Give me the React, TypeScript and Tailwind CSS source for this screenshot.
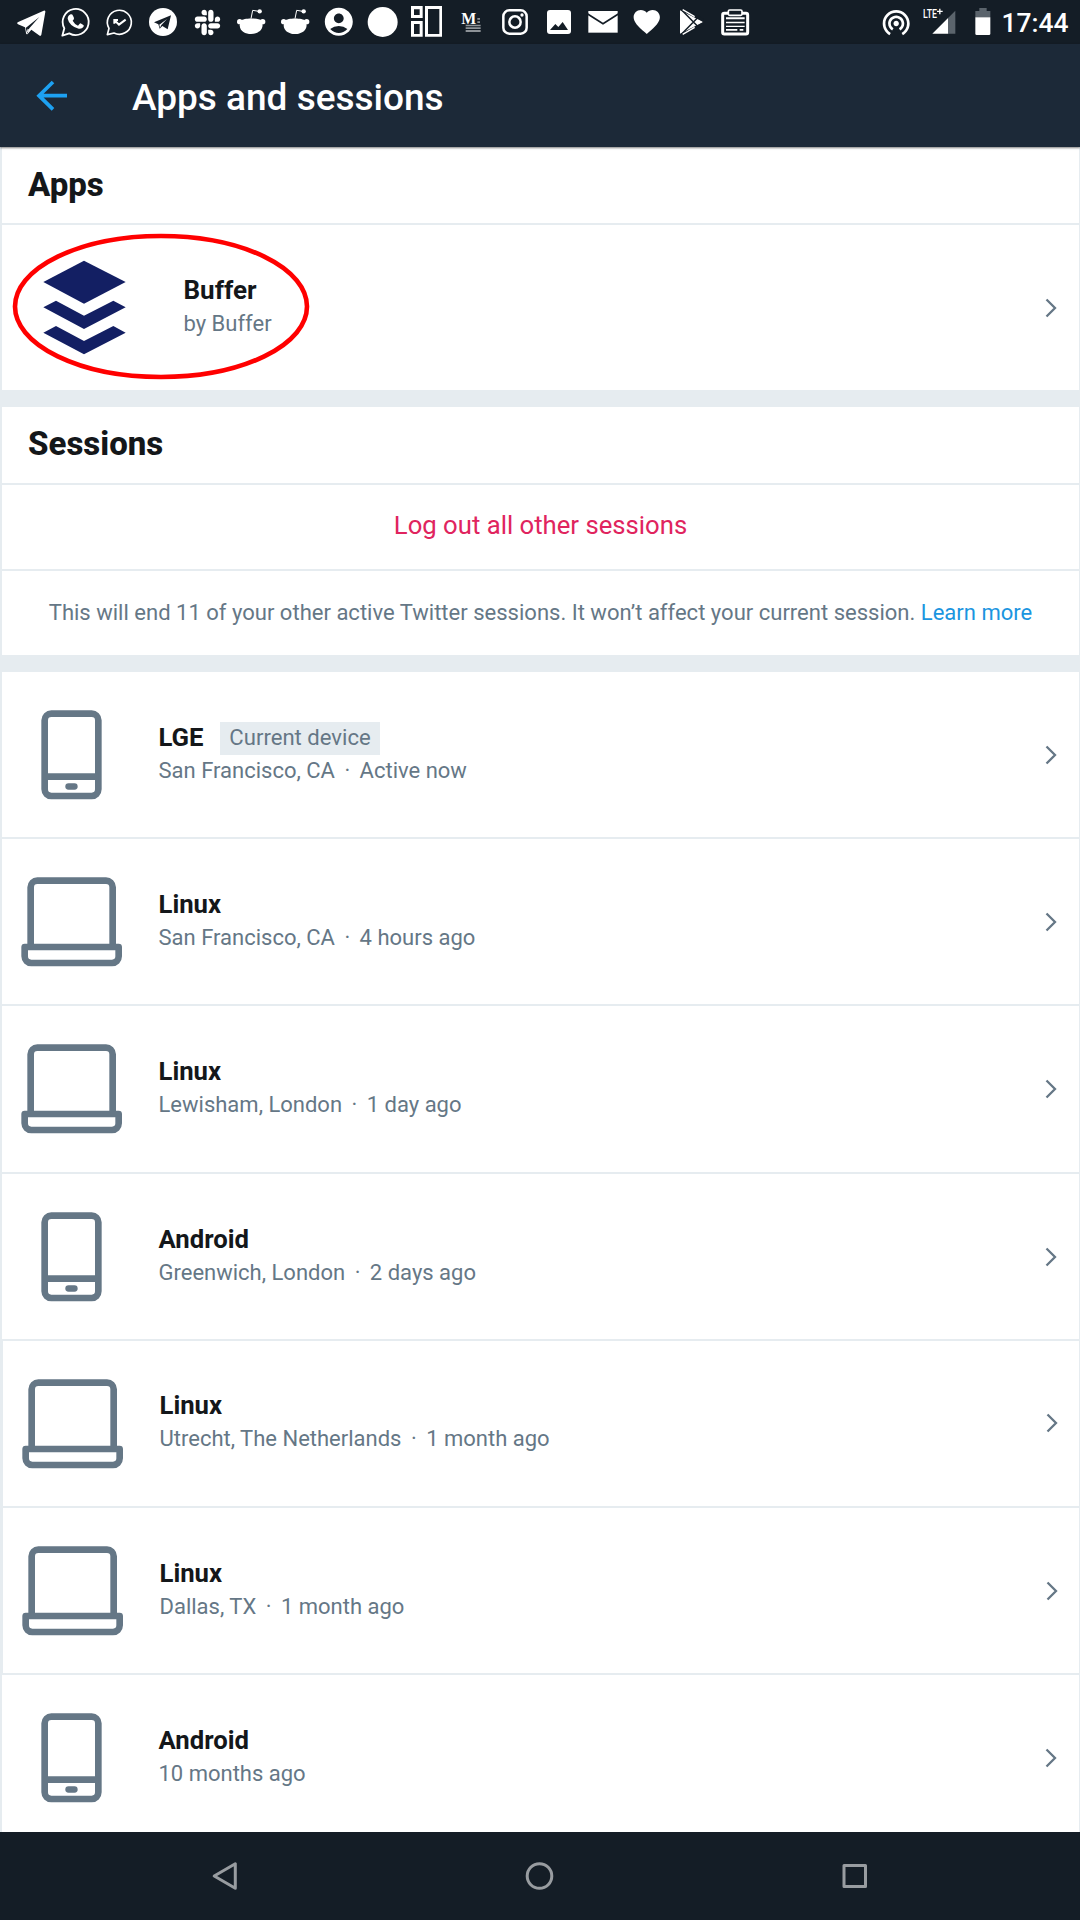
import React from 'react';
import { FaSlack } from 'react-icons/fa';
import { MdAccountCircle, MdFavorite, MdWifiTethering } from 'react-icons/md';

const DARK = '#141d26';

function Glyph({ x, children }: { x: number; children: React.ReactNode }) {
  return (
    <svg className="size-11" viewBox={`${x} 0 132 132`} fill="#fff">
      {children}
    </svg>
  );
}

function Slot({ children }: { children: React.ReactNode }) {
  return <div className="flex size-11 items-center justify-center">{children}</div>;
}

function RedditGlyph() {
  return (
    <Glyph x={687}>
      <path d="M722 62C731 53 775 53 785 62C796 90 772 102 753 102C734 102 711 90 722 62Z" />
      <circle cx="719" cy="65" r="8" />
      <circle cx="788" cy="65" r="8" />
      <path d="M753 56L758 31L776 34" fill="none" stroke="#fff" strokeWidth="3" />
      <circle cx="779" cy="34" r="6.5" />
    </Glyph>
  );
}

function StatusBar() {
  return (
    <div className="flex h-11 bg-[#141d26] pl-[9px] text-white">
      <Glyph x={27}>
        <path d="M53 67L131 32Q137 30 136 36L124 104Q122 110 117 106L94 89L83 102Q79 105 78 99L75 82L54 73Q49 70 53 67Z" />
        <path d="M77 84L118 51L88 85L82 101Z" fill={DARK} />
        <path d="M80 100L83 86L88 89Z" />
      </Glyph>
      <Glyph x={159}>
        <path d="M187 107L193 85A39 39 0 1 1 208 100Z" fill="none" stroke="#fff" strokeWidth="5.5" strokeLinejoin="round" />
        <path d="M212 43Q217 42 219 47L222 54Q223 57 218 62Q224 73 234 77L239 71Q241 69 244 71L250 75Q253 77 250 81Q245 88 236 86Q208 78 203 56Q203 47 212 43Z" />
      </Glyph>
      <Glyph x={291}>
        <path d="M322 104L327 85A36 36 0 1 1 342 99Z" fill="none" stroke="#fff" strokeWidth="5" strokeLinejoin="round" />
        <path d="M343 60L357 74L377 59M343 71V60H354" fill="none" stroke="#fff" strokeWidth="6" />
      </Glyph>
      <Glyph x={423}>
        <circle cx="489" cy="66" r="42" />
        <path d="M462 67L513 46L503 88L487 78L479 86L475 73Z" fill={DARK} />
        <path d="M478 74L501 57L484 75L480 83Z" />
      </Glyph>
      <Slot>
        <FaSlack size={29} />
      </Slot>
      <RedditGlyph />
      <RedditGlyph />
      <Slot>
        <MdAccountCircle size={33.6} />
      </Slot>
      <Glyph x={-27}>
        <circle cx="38" cy="66" r="45" />
      </Glyph>
      <Glyph x={105}>
        <path
          fillRule="evenodd"
          d="M123 18H158V54H123ZM132 28V45H149V28ZM123 63H158V110H123ZM132 72V102H149V72ZM165 18H216V110H165ZM174 27V102H208V27Z"
        />
      </Glyph>
      <Glyph x={237}>
        <text x="274" y="73" fontFamily="Liberation Serif, serif" fontWeight="700" fontSize="52" textLength="45" lengthAdjust="spacingAndGlyphs">
          M
        </text>
        <path d="M287 74H332V79H287ZM287 82H332V87H287ZM287 90H332V96H287ZM322 54H330V59H322ZM322 64H330V69H322Z" fill="#8d9297" />
      </Glyph>
      <Glyph x={369}>
        <rect x="400" y="31" width="70" height="70" rx="18" fill="none" stroke="#fff" strokeWidth="7.5" />
        <circle cx="435" cy="66" r="17" fill="none" stroke="#fff" strokeWidth="7.5" />
        <circle cx="456" cy="45" r="5" />
      </Glyph>
      <Glyph x={501}>
        <rect x="531" y="30" width="72" height="72" rx="9" />
        <path d="M540 90L556 72L565 81L578 66L594 90Z" fill={DARK} />
      </Glyph>
      <Glyph x={633}>
        <rect x="655" y="33" width="88" height="65" />
        <path d="M653 42L699 71L745 42" fill="none" stroke={DARK} strokeWidth="5" />
      </Glyph>
      <Slot>
        <MdFavorite size={31.5} />
      </Slot>
      <Glyph x={897}>
        <path d="M930 31L1000 66L930 101Z" />
        <path d="M938 22L1000 56V66H1000L937 28ZM938 110L1000 76V66L937 103Z" fill={DARK} />
        <path d="M932 27L988 84M932 105L988 48" stroke={DARK} strokeWidth="4.5" />
        <path d="M938 29L974 50M938 103L974 82" stroke="#fff" strokeWidth="4" />
      </Glyph>
      <Glyph x={1029}>
        <rect x="1058" y="40" width="75" height="62" rx="5" fill="none" stroke="#fff" strokeWidth="9" />
        <path d="M1068 52H1124V58H1068ZM1068 65H1124V70H1068ZM1068 77H1124V81H1068ZM1068 87H1102V92H1068ZM1109 87H1120V92H1109Z" />
        <rect x="1075" y="30" width="41" height="16" rx="4" fill={DARK} stroke="#fff" strokeWidth="5" />
      </Glyph>

      <div className="ml-auto flex pr-[11.500px]">
        <MdWifiTethering size={32.4} className="mt-[6px]" />
        <svg className="ml-[9px] h-11 w-9" viewBox="545 0 108 132">
          <path d="M576 101L624 53V101Z" fill="#fff" />
          <path d="M624 53L645 32V101H624Z" fill="#5b646c" />
          <text x="548" y="54" fill="#fff" fontFamily="Roboto, sans-serif" fontWeight="500" fontSize="38" textLength="42" lengthAdjust="spacingAndGlyphs">
            LTE
          </text>
          <path d="M590 34H607M598.500 26V43" stroke="#fff" strokeWidth="4" />
        </svg>
        <svg className="ml-[17px] h-11 w-4" viewBox="704 0 48 132">
          <path d="M717 24H739V33H750V52H705V33H717Z" fill="#5b646c" />
          <path d="M705 52H750V101Q750 105 746 105H709Q705 105 705 101Z" fill="#fff" />
        </svg>
        <div className="ml-[11px] pt-px text-[26.4px] leading-[44px] font-medium">17:44</div>
      </div>
    </div>
  );
}

function Chevron({ inset = 'mr-[22px] mt-px' }: { inset?: string }) {
  return (
    <svg className={`${inset} ml-auto h-5 w-3 self-center`} viewBox="0 0 12 20" fill="none" stroke="#657786" strokeWidth="2.3">
      <path d="M1.500 1.500L10 10L1.500 18.500" />
    </svg>
  );
}

function PhoneIcon() {
  return (
    <svg className="h-[90px] w-[101px]" viewBox="63 90 303 270" fill="none" stroke="#657786" strokeWidth="20">
      <rect x="134" y="101" width="161" height="247" rx="20" />
      <path d="M134 290H295" />
      <rect x="196" y="310" width="37" height="19" rx="9.500" fill="#657786" stroke="none" />
    </svg>
  );
}

function LaptopIcon() {
  return (
    <svg className="h-[90px] w-[101px]" viewBox="63 591 303 270" fill="none" stroke="#657786" strokeWidth="20">
      <path d="M92 800V622A20 20 0 0 1 112 602H318A20 20 0 0 1 338 622V800" />
      <path d="M74 801H356V829A20 20 0 0 1 336 849H94A20 20 0 0 1 74 829Z" strokeLinejoin="round" />
    </svg>
  );
}

type Session = {
  kind: 'phone' | 'laptop';
  name: string;
  place?: string;
  when: string;
  current?: boolean;
  row: string;
  iconTop: string;
  textTop: string;
  chevron?: string;
};

const sessions: Session[] = [
  { kind: 'phone', name: 'LGE', place: 'San Francisco, CA', when: 'Active now', current: true, row: 'h-[167px]', iconTop: 'pt-[38px]', textTop: 'pt-[49px]' },
  { kind: 'laptop', name: 'Linux', place: 'San Francisco, CA', when: '4 hours ago', row: 'h-[167px]', iconTop: 'pt-[38px]', textTop: 'pt-[49px]' },
  { kind: 'laptop', name: 'Linux', place: 'Lewisham, London', when: '1 day ago', row: 'h-[168px]', iconTop: 'pt-[37.500px]', textTop: 'pt-[49px]', chevron: 'mr-[22px]' },
  { kind: 'phone', name: 'Android', place: 'Greenwich, London', when: '2 days ago', row: 'h-[167px]', iconTop: 'pt-[38px]', textTop: 'pt-[49px]' },
  { kind: 'laptop', name: 'Linux', place: 'Utrecht, The Netherlands', when: '1 month ago', row: 'h-[167px] border-l', iconTop: 'pt-[37.500px]', textTop: 'pt-[48px]', chevron: 'mr-[21px] mb-px' },
  { kind: 'laptop', name: 'Linux', place: 'Dallas, TX', when: '1 month ago', row: 'h-[167px] border-l', iconTop: 'pt-[37.500px]', textTop: 'pt-[49px]', chevron: 'mr-[21px] mt-px' },
  { kind: 'phone', name: 'Android', when: '10 months ago', row: 'h-[167px]', iconTop: 'pt-[38px]', textTop: 'pt-[49px]' },
];

function SessionRow({ s }: { s: Session }) {
  return (
    <li className={`flex shrink-0 border-b-2 border-[#e6ecf0] bg-white pl-[19px] ${s.row}`}>
      <div className={s.iconTop}>{s.kind === 'phone' ? <PhoneIcon /> : <LaptopIcon />}</div>
      <div className={`ml-[36.5px] ${s.textTop}`}>
        <div className="flex h-[33px] text-[25.7px] leading-[33px] font-bold text-[#14171a]">
          {s.name}
          {s.current && (
            <span className="mt-px ml-[16.500px] h-[33px] bg-[#e6ecf0] px-[9.3px] text-[22.1px] leading-[31px] font-normal text-[#657786]">Current device</span>
          )}
        </div>
        <div className="text-[22px] leading-[33px] text-[#657786]">
          {s.place && (
            <>
              {s.place} <span className="mx-[4px]">·</span>{' '}
            </>
          )}
          {s.when}
        </div>
      </div>
      <Chevron inset={s.chevron} />
    </li>
  );
}

export default function App() {
  return (
    <div className="flex h-[1920px] w-[1080px] flex-col overflow-hidden bg-[#e6ecf0] font-['Roboto',sans-serif]">
      <StatusBar />
      <header className="relative z-10 flex h-[103px] shrink-0 items-center bg-[#1c2938] shadow-[0_1px_2px_rgba(0,0,0,0.5)]">
        <svg className="ml-9 h-8 w-8" viewBox="108 240 96 96" fill="none" stroke="#1da1f2" strokeWidth="11">
          <path d="M159 246L117 287L159 328M116 287H201" />
        </svg>
        <h1 className="ml-16 pt-1 text-[37px] leading-[44px] font-medium text-white">Apps and sessions</h1>
      </header>

      <main className="flex min-h-0 flex-1 flex-col overflow-hidden pr-px pl-0.5">
        <section className="shrink-0">
          <h2 className="flex h-[78px] items-center border-b-2 border-[#e6ecf0] bg-white pb-px pl-[26px] text-[33px] font-extrabold text-[#14171a]">Apps</h2>
          <div className="relative flex h-[165px] bg-white">
            <svg className="mt-[35px] ml-[41px] h-[95px] w-[83px]" viewBox="129 345 249 285" fill="#131f63">
              <path d="M130 411L252 347L377 411L252 476Z" />
              <path d="M130 487L168 467L252 512L340 467L377 487L252 552Z" />
              <path d="M130 563L168 543L252 588L340 543L377 563L252 628Z" />
            </svg>
            <div className="ml-[57.500px] pt-[49px]">
              <div className="text-[26px] leading-[33px] font-bold text-[#14171a]">Buffer</div>
              <div className="text-[22px] leading-[33px] text-[#657786]">by Buffer</div>
            </div>
            <Chevron inset="mr-[22px]" />
            <svg className="absolute top-2 left-[10px] h-[148px] w-[298px]" viewBox="0 0 298 148" fill="none">
              <ellipse cx="149" cy="73.500" rx="146" ry="70.500" stroke="#ff0000" strokeWidth="4.6" />
            </svg>
          </div>
        </section>

        <section className="mt-[17px] shrink-0 bg-white">
          <h2 className="flex h-[78px] items-center border-b-2 border-[#e6ecf0] pb-[3px] pl-[26px] text-[33px] font-extrabold text-[#14171a]">Sessions</h2>
          <button className="flex h-[86px] w-full items-center justify-center border-b-2 border-[#e6ecf0] pb-1 text-[25.7px] text-[#e0245e]">
            Log out all other sessions
          </button>
          <p className="flex h-[84px] items-center justify-center pb-px text-[22.04px] whitespace-pre text-[#657786]">
            This will end 11 of your other active Twitter sessions. It won’t affect your current session. <a className="text-[#1b95e0]">Learn more</a>
          </p>
        </section>

        <ul className="mt-[17px] flex flex-col">
          {sessions.map((s, i) => (
            <SessionRow key={i} s={s} />
          ))}
        </ul>
      </main>

      <nav className="flex h-[88px] shrink-0 items-center justify-center bg-[#141d26]">
        <div className="flex w-[315px] justify-center">
          <svg className="size-8" viewBox="0 0 32 32" fill="none" stroke="#989ca0" strokeWidth="3" strokeLinejoin="round">
            <path d="M26.300 3.700V28.300L5.200 16Z" />
          </svg>
        </div>
        <div className="flex w-[315px] justify-center">
          <svg className="size-8" viewBox="0 0 32 32" fill="none" stroke="#989ca0" strokeWidth="3">
            <circle cx="15.500" cy="16" r="12.300" />
          </svg>
        </div>
        <div className="flex w-[315px] justify-center">
          <svg className="size-8" viewBox="0 0 32 32" fill="none" stroke="#989ca0" strokeWidth="3" strokeLinejoin="round">
            <rect x="5" y="5.500" width="21.500" height="21" />
          </svg>
        </div>
      </nav>
    </div>
  );
}
